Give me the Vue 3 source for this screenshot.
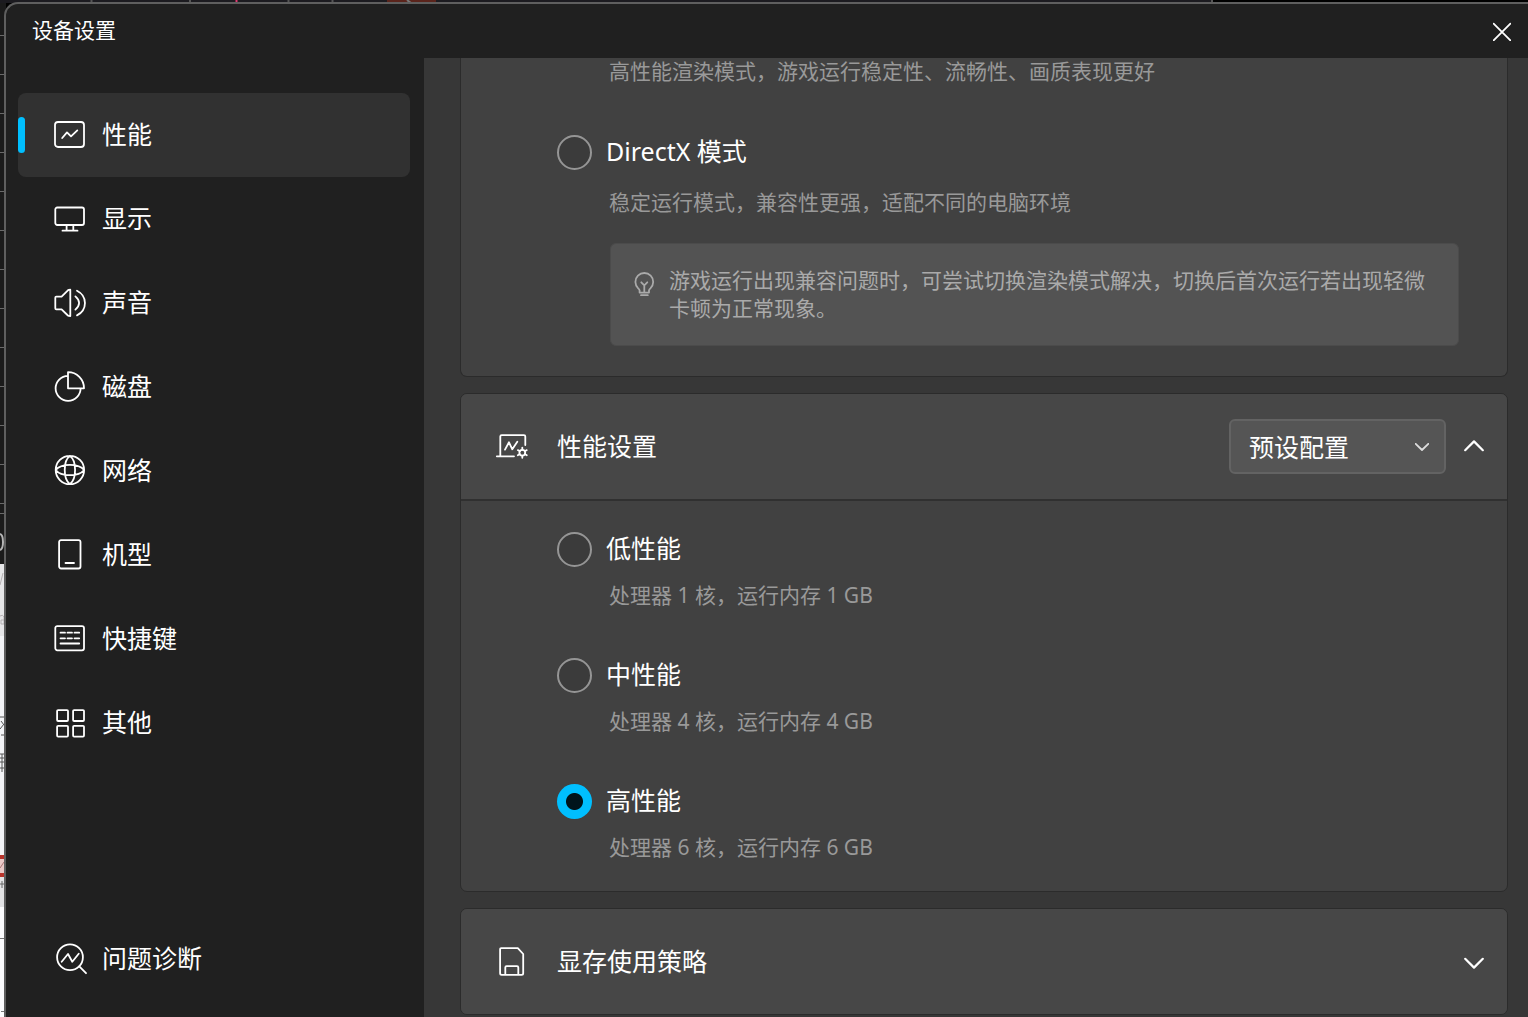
<script setup>
import { ref } from 'vue'

const navItems = [
  { id: 'perf', label: '性能', d: 'M5 4H28a3 3 0 0 1 3 3V26a3 3 0 0 1 -3 3H5a3 3 0 0 1 -3 -3V7a3 3 0 0 1 3 -3zM9.2 20L14 14.4L18 18.3L24.3 12.4' },
  { id: 'display', label: '显示', d: 'M4.3 5.5H29a2 2 0 0 1 2 2V21a2 2 0 0 1 -2 2H4.3a2 2 0 0 1 -2 -2V7.5a2 2 0 0 1 2 -2zM13.6 23V28.5M20.3 23V28.5M9.5 28.7H24.5' },
  { id: 'sound', label: '声音', d: 'M3.3 10.7H8.6L14.9 4.3Q15.6 3.7 17.3 3.7V30.1Q15.6 30.1 14.9 29.5L8.6 23.3H3.3Q2.3 23.3 2.3 22.3V11.7Q2.3 10.7 3.3 10.7zM22.4 10.4Q29.8 17 22.4 23.6M24 4.7C34.6 10 34.6 24 24 29.4' },
  { id: 'disk', label: '磁盘', d: 'M15 2.2V18.3H31A16 16 0 0 0 15 2.2zM15 5.8A12.5 12.5 0 1 0 27.6 18.3' },
  { id: 'network', label: '网络', d: 'M2.7 16a14.2 14.2 0 1 0 28.4 0a14.2 14.2 0 1 0 -28.4 0zM16.9 1.8C10 7 10 25 16.9 30.2C23.8 25 23.8 7 16.9 1.8zM2.7 16C8 9.1 25.8 9.1 31.1 16C25.8 22.9 8 22.9 2.7 16z' },
  { id: 'model', label: '机型', d: 'M8.1 2.1H25.5a2 2 0 0 1 2 2V28.5a2 2 0 0 1 -2 2H8.1a2 2 0 0 1 -2 -2V4.1a2 2 0 0 1 2 -2zM12.5 25H21' },
  { id: 'keys', label: '快捷键', d: 'M4.3 4.1H29a2 2 0 0 1 2 2V26.3a2 2 0 0 1 -2 2H4.3a2 2 0 0 1 -2 -2V6.1a2 2 0 0 1 2 -2zM7.5 10.7H12M14.5 10.7H19M21.5 10.7H26.2M7.5 16.3H12M14.5 16.3H19M21.5 16.3H26.2M7.5 21.5H26.2' },
  { id: 'other', label: '其他', d: 'M5.1 4.1H14a1 1 0 0 1 1 1V14a1 1 0 0 1 -1 1H5.1a1 1 0 0 1 -1 -1V5.1a1 1 0 0 1 1 -1zM21.1 4.1H30a1 1 0 0 1 1 1V14a1 1 0 0 1 -1 1H21.1a1 1 0 0 1 -1 -1V5.1a1 1 0 0 1 1 -1zM5.1 19.8H14a1 1 0 0 1 1 1V29.6a1 1 0 0 1 -1 1H5.1a1 1 0 0 1 -1 -1V20.8a1 1 0 0 1 1 -1zM21.1 19.8H30a1 1 0 0 1 1 1V29.6a1 1 0 0 1 -1 1H21.1a1 1 0 0 1 -1 -1V20.8a1 1 0 0 1 1 -1z' },
]
const levels = [
  { id: 'low', label: '低性能', desc: '处理器 1 核，运行内存 1 GB' },
  { id: 'mid', label: '中性能', desc: '处理器 4 核，运行内存 4 GB' },
  { id: 'high', label: '高性能', desc: '处理器 6 核，运行内存 6 GB' },
]
const active = ref('perf')
const renderMode = ref('')
const level = ref('high')
const preset = ref('preset')
const ticks = [35, 74, 113, 152, 191, 230, 269, 308, 347, 386, 425, 464, 503, 513]
</script>

<template>
  <div class="desktop">
    <svg class="edge-left" width="6" height="1017" aria-hidden="true">
      <rect width="6" height="564" fill="#1b1b1b" />
      <rect v-for="y in ticks" :key="y" :y="y" width="6" height="1" fill="#6a6a6a" />
      <path d="M0 534Q3 535 3 542Q3 549 0 550" fill="none" stroke="#b5b5b5" stroke-width="2" />
      <rect y="564" width="6" height="72" fill="#e6e6e8" />
      <path d="M0 585L3 573M0 616Q3 614 4 617V624H1V620H4" fill="none" stroke="#b4b0b2" />
      <rect y="636" width="6" height="219" fill="#f3f4f7" />
      <path d="M0 717H4M1 721L4 725M0 729L4 724M1 735H4M0 754H4M0 758H4M0 762H4M0 768H4M2 754V772" fill="none" stroke="#555" />
      <rect y="855" width="6" height="22" fill="#b8332b" />
      <rect y="859" width="6" height="14" fill="#eac9c8" />
      <path d="M0 868L4 862" stroke="#a77" />
      <rect y="877" width="6" height="30" fill="#e3e3e5" />
      <path d="M0 884H4M2 881V888" stroke="#666" />
      <rect y="907" width="6" height="110" fill="#fcfcfe" />
      <path d="M0 938.5H5M1 1011.5H5" stroke="#777" />
    </svg>
    <svg class="edge-top" width="1213" height="3" aria-hidden="true">
      <rect width="1213" height="3" fill="#1c1b20" />
      <path d="M91.5 0V3M190 0V3M288.5 0V3M332.5 0V3M1212 0V3" stroke="#555" stroke-width="2" />
      <path d="M236.5 0V3" stroke="#e0396f" stroke-width="2" />
      <path d="M387 1H436" stroke="#5a241c" stroke-width="3" />
      <path d="M407 0L411 3" stroke="#777" stroke-width="2" />
    </svg>

    <section class="window">
      <header class="titlebar">
        <h1>设备设置</h1>
        <button class="close" type="button" aria-label="关闭">
          <svg width="18" height="20" viewBox="0 0 18 20"><path d="M.6 2.6L17.4 19.4M17.4 2.6L.6 19.4" /></svg>
        </button>
      </header>

      <div class="columns">
        <nav class="sidebar">
          <button v-for="item in navItems" :key="item.id" type="button" class="nav-item"
            :class="{ active: active === item.id }" @click="active = item.id">
            <svg class="icon" viewBox="0 0 34 34"><path :d="item.d" /></svg>
            <span>{{ item.label }}</span>
          </button>
          <button type="button" class="nav-item diagnose">
            <svg class="icon" viewBox="0 0 34 34">
              <circle cx="17" cy="15.2" r="12.9" />
              <path d="M26.3 24.3L33 31.2M8.7 19.7L15 12L19.3 19.7L25.7 11.7" />
            </svg>
            <span>问题诊断</span>
          </button>
        </nav>

        <main class="content">
          <section class="card continued">
            <p class="desc">高性能渲染模式，游戏运行稳定性、流畅性、画质表现更好</p>
            <div class="option roomy">
              <label class="choice">
                <input v-model="renderMode" type="radio" name="render" value="directx" />
                <span>DirectX 模式</span>
              </label>
              <p class="desc">稳定运行模式，兼容性更强，适配不同的电脑环境</p>
            </div>
            <aside class="tip">
              <svg class="bulb" viewBox="0 0 28 28">
                <path d="M9.6 22.6V20.4Q9.4 19.4 8.2 18.4A8.9 8.9 0 1 1 20.4 18.4Q19.2 19.4 19 20.4V22.6zM11 25.2H17.8M11.3 12.3L14.3 15.3L17.3 12.3M14.3 15.3V22.4" />
              </svg>
              <p>游戏运行出现兼容问题时，可尝试切换渲染模式解决，切换后首次运行若出现轻微卡顿为正常现象。</p>
            </aside>
          </section>

          <section class="card">
            <header class="card-head open">
              <svg class="icon" viewBox="0 0 34 34">
                <path d="M1.8 26.3H19M5.3 26V6.5Q5.3 5.1 6.7 5.1H28.9Q30.3 5.1 30.3 6.5V15M10 19.6L14 12.3L17.3 19.3L22.3 11.7" />
                <circle cx="27.3" cy="22.7" r="2.9" />
                <path d="M27.3 17.6V19.8M27.3 25.6V27.8M22.8 20.1L24.8 21.3M29.8 24.1L31.8 25.3M22.8 25.3L24.8 24.1M29.8 21.3L31.8 20.1" />
              </svg>
              <h2>性能设置</h2>
              <div class="select">
                <select v-model="preset" aria-label="性能设置">
                  <option value="preset">预设配置</option>
                  <option value="custom">自定义</option>
                </select>
                <svg width="14" height="8" viewBox="0 0 14 8"><path d="M.7 .8L7 7L13.3 .8" /></svg>
              </div>
              <button class="toggle" type="button" aria-label="收起">
                <svg width="20" height="14" viewBox="0 0 20 14"><path d="M1.2 10.2L10 1.4L18.8 10.2" /></svg>
              </button>
            </header>
            <div class="card-body">
              <div v-for="item in levels" :key="item.id" class="option">
                <label class="choice">
                  <input v-model="level" type="radio" name="level" :value="item.id" />
                  <span>{{ item.label }}</span>
                </label>
                <p class="desc">{{ item.desc }}</p>
              </div>
            </div>
          </section>

          <section class="card">
            <header class="card-head">
              <svg class="icon" viewBox="0 0 34 34">
                <path d="M6.3 3.1H22.8L28.2 9V28.3Q28.2 29.9 26.6 29.9H6.7Q5.1 29.9 5.1 28.3V4.5Q5.1 3.1 6.3 3.1zM10.3 29.5V22.5Q10.3 21.2 11.6 21.2H22Q23.3 21.2 23.3 22.5V29.5" />
              </svg>
              <h2>显存使用策略</h2>
              <button class="toggle" type="button" aria-label="展开">
                <svg width="20" height="14" viewBox="0 0 20 14"><path d="M1.2 3.8L10 12.6L18.8 3.8" /></svg>
              </button>
            </header>
          </section>
        </main>
      </div>
    </section>
  </div>
</template>

<style>
body { margin: 0; background: #000; }
</style>

<style scoped>
.desktop {
  position: relative;
  box-sizing: border-box;
  height: 100vh;
  padding: 2px 0 0 4px;
  overflow: hidden;
  background: #000;
  color: #fff;
  font-family: "Noto Sans", "Noto Sans CJK SC", sans-serif;
  font-size: 25px;
}
.edge-left, .edge-top { position: absolute; top: 0; left: 0; }
h1, h2, p { margin: 0; font-weight: 400; }
button { padding: 0; border: 0; background: none; color: inherit; font: inherit; cursor: pointer; }
svg path, svg circle { fill: none; }
.window svg {
  flex: none;
  stroke: currentColor;
  stroke-width: 1.8;
  stroke-linecap: round;
  stroke-linejoin: round;
}
.icon { width: 34px; height: 34px; }

.window {
  position: relative;
  box-sizing: border-box;
  display: flex;
  flex-direction: column;
  height: 100%;
  border: solid #5f5f5f;
  border-width: 2px 0 0 2px;
  border-top-left-radius: 14px;
  background: #202020;
}
.titlebar {
  display: flex;
  flex: none;
  align-items: center;
  justify-content: space-between;
  height: 54px;
  padding: 0 17px 0 26px;
}
h1 { padding-bottom: 2px; font-size: 21px; line-height: 28px; }
.close { display: flex; }

.columns { display: flex; flex: 1; min-height: 0; }
.sidebar {
  box-sizing: border-box;
  display: flex;
  flex: none;
  flex-direction: column;
  width: 418px;
  padding: 35px 14px 16px 12px;
}
.nav-item {
  position: relative;
  display: flex;
  flex: none;
  align-items: center;
  gap: 15px;
  height: 84px;
  padding-left: 35px;
  border-radius: 8px;
  line-height: 34px;
}
.nav-item span, .choice span, h2 { padding-bottom: 2px; }
.nav-item.active { background: #313131; }
.nav-item.active::before {
  position: absolute;
  top: 24px;
  left: 0;
  width: 7px;
  height: 36px;
  border-radius: 4px;
  background: #00bfff;
  content: "";
}
.diagnose { margin-top: auto; }

.content {
  display: flex;
  flex: 1;
  flex-direction: column;
  gap: 16px;
  min-width: 0;
  padding: 0 20px 0 36px;
  overflow: hidden;
  background: #373737;
}
.card {
  flex: none;
  border: 1px solid #2b2b2b;
  border-radius: 7px;
  background: #414141;
}
.continued {
  padding: 0 48px 30px 96px;
  border-top: 0;
  border-radius: 0 0 7px 7px;
}
.card-head {
  display: flex;
  align-items: center;
  height: 105px;
  padding: 0 23px 0 34px;
  border-radius: 6px;
  background: #474747;
}
.card-head.open { border-bottom: 2px solid #303030; border-radius: 6px 6px 0 0; }
h2 { flex: 1; margin-left: 28px; font-size: 25px; line-height: 34px; }
.select { display: grid; align-items: center; width: 217px; margin-right: 18px; }
.select > * { grid-area: 1 / 1; }
.select svg { justify-self: end; margin-right: 17px; color: #ddd; pointer-events: none; }
select {
  width: 100%;
  height: 55px;
  padding: 0 48px 0 18px;
  border: 2px solid #636363;
  border-radius: 6px;
  background: #555;
  color: #fff;
  font: inherit;
  appearance: none;
}
.toggle { display: flex; }
.toggle svg { stroke-width: 2.2; }

.card-body { display: grid; gap: 49px; padding: 30px 48px 31px 96px; }
.option { display: grid; gap: 15px; }
.roomy { gap: 19px; margin: 50px 0 28px; }
.choice { display: flex; align-items: center; gap: 14px; height: 36px; line-height: 34px; }
input {
  box-sizing: border-box;
  flex: none;
  width: 35px;
  height: 35px;
  margin: 0;
  border: 2px solid #959595;
  border-radius: 50%;
  background: #3b3b3b;
  appearance: none;
}
input:checked { border: 0; background: radial-gradient(circle, #00141c 8px, #00bfff 9px); }
.desc { padding-left: 52px; color: #999; font-size: 21px; line-height: 26px; }
.tip {
  display: flex;
  gap: 11px;
  margin-left: 53px;
  padding: 22px 23px 23px 19px;
  border: 1px solid #4b4b4b;
  border-radius: 6px;
  background: #535353;
  color: #aaa;
  font-size: 21px;
  line-height: 28px;
}
.bulb { width: 28px; height: 28px; margin-top: 4px; }
</style>
